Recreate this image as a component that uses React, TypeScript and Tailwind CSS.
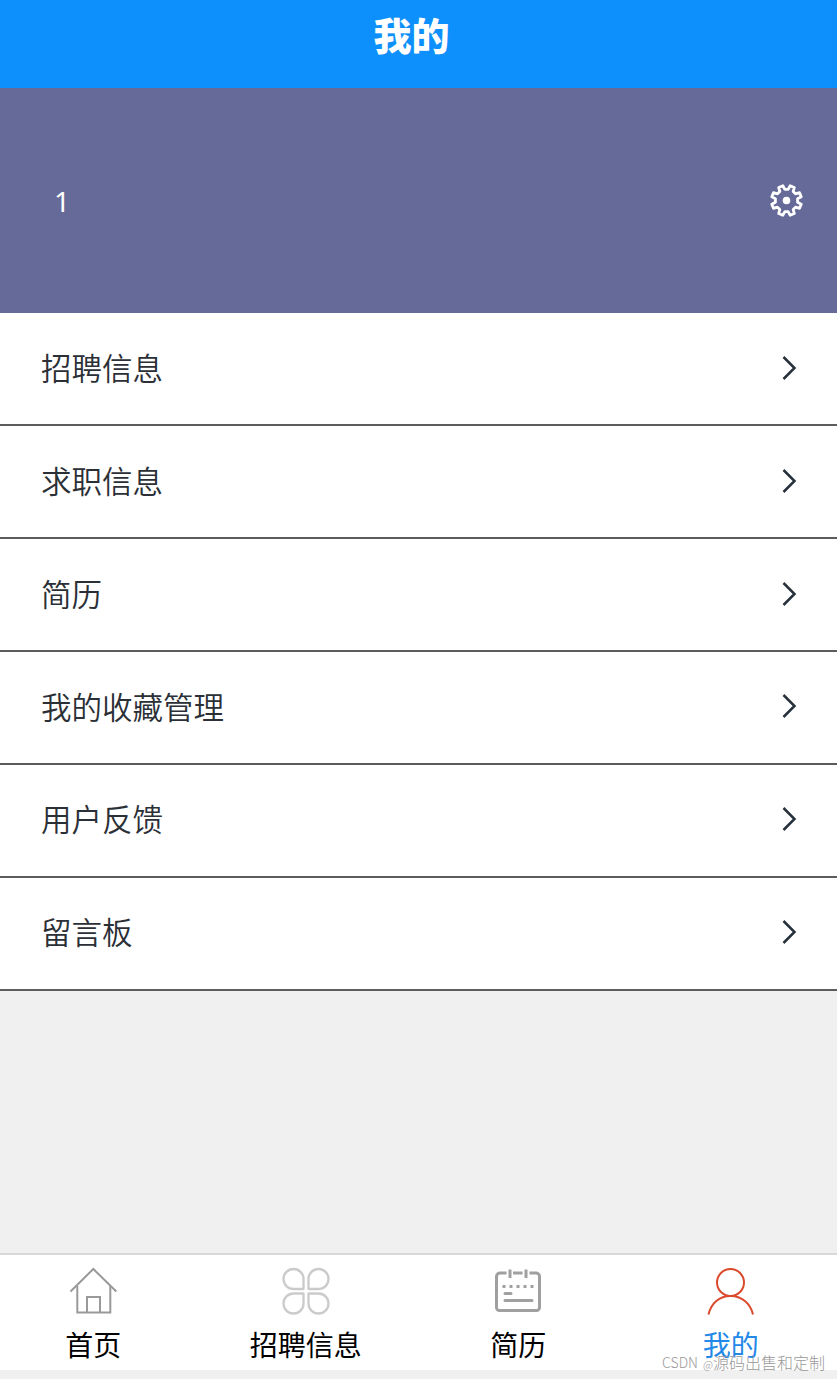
import type { ReactNode } from "react";

const menuItems = ["招聘信息", "求职信息", "简历", "我的收藏管理", "用户反馈", "留言板"];

const iconProps = {
  width: 48,
  height: 48,
  viewBox: "0 0 48 48",
  fill: "none",
  strokeWidth: 2,
};

const HomeIcon = () => (
  <svg {...iconProps} stroke="#999999">
    <path d="M1.5 24.500 24.300 2l23 22.500" />
    <path d="M8.300 19v26.500h33V19M18 45V30h13v15" />
  </svg>
);

const CloverIcon = () => (
  <svg {...iconProps} stroke="#cbcbcb" strokeWidth={2.3} strokeLinejoin="round">
    <path d="M21.500 22H11.500A10 10 0 1 1 21.500 12ZM26.500 22H36.500A10 10 0 1 0 26.500 12ZM21.500 26.500H11.500A10 10 0 1 0 21.500 36.500ZM26.500 26.500H36.500A10 10 0 1 1 26.500 36.500Z" />
  </svg>
);

const CalendarIcon = () => (
  <svg {...iconProps} stroke="#a0a0a0" strokeWidth={3}>
    <path d="M12.500 6H6a3.500 3.500 0 0 0-3.500 3.500v31A3 3 0 0 0 5.500 43.500h37a3 3 0 0 0 3-3v-31A3.500 3.500 0 0 0 42 6h-6.500M19 6h9.500" />
    <path d="M16 2.500v8.500M32 2.500v8.500" />
    <path d="M8.500 19.500h31" strokeDasharray="3 4" />
    <path d="M11 26.500h6M11 33.500h27" strokeLinecap="round" />
  </svg>
);

const UserIcon = () => (
  <svg {...iconProps} stroke="#dc4a2e">
    <circle cx="23.500" cy="15.500" r="13.500" />
    <path d="M1.500 47.500C4 36 12.500 29 23.500 29s20 7 22.500 18.500" />
  </svg>
);

const gearPoints = Array.from({ length: 8 }, (_, i) => {
  const tooth = 22.5 + i * 45;
  return [
    [11.2, -14],
    [15.2, -8.5],
    [15.2, 8.5],
    [11.2, 14],
  ]
    .map(([r, offset]) => {
      const a = ((tooth + offset) * Math.PI) / 180;
      return `${(16.5 + r * Math.cos(a)).toFixed(2)},${(16.5 + r * Math.sin(a)).toFixed(2)}`;
    })
    .join(" ");
}).join(" ");

const GearIcon = () => (
  <svg width="34" height="34" viewBox="0 0 34 34" fill="none" className="overflow-visible">
    <polygon points={gearPoints} stroke="white" strokeWidth="2.800" strokeLinejoin="round" />
    <circle cx="16.500" cy="16.500" r="3.800" fill="white" />
  </svg>
);

const ChevronIcon = () => (
  <svg width="16" height="26" viewBox="0 0 16 26" fill="none" stroke="#26313c" strokeWidth="2.500">
    <path d="m2.500 2 11 11-11 11" />
  </svg>
);

const tabs: { label: string; icon: ReactNode; active?: boolean }[] = [
  { label: "首页", icon: <HomeIcon /> },
  { label: "招聘信息", icon: <CloverIcon /> },
  { label: "简历", icon: <CalendarIcon /> },
  { label: "我的", icon: <UserIcon />, active: true },
];

const App = () => (
  <div className="relative flex h-[1379px] w-[837px] flex-col overflow-hidden bg-[#f0f0f0] font-['Noto_Sans_CJK_SC',sans-serif]">
    <header className="flex h-[88px] shrink-0 justify-center bg-[#0d90fb] pt-[7px] pr-[14px]">
      <h1 className="text-[38px] leading-[54px] font-black text-white">我的</h1>
    </header>

    <section className="flex h-[225px] shrink-0 items-center justify-between bg-[#666a99] pr-[33px] pl-[54px]">
      <span className="font-['Noto_Sans',sans-serif] text-[28px] text-white">1</span>
      <GearIcon />
    </section>

    <ul className="shrink-0 bg-white pt-[0.5px]">
      {menuItems.map((item) => (
        <li
          key={item}
          className="flex h-[112.85px] items-center justify-between border-b-2 border-[#5c5c5e] pr-[40px] pb-[2px] pl-[41px]"
        >
          <span className="text-[30.5px] font-[350] text-[#2b2f36]">{item}</span>
          <ChevronIcon />
        </li>
      ))}
    </ul>

    <nav className="mt-auto mb-[9px] h-[117px] shrink-0 border-t-2 border-[#d8d8d8] bg-white">
      <div className="-ml-[13px] grid w-[850px] grid-cols-4 pt-[12px]">
        {tabs.map((tab) => (
          <a key={tab.label} className="flex flex-col items-center">
            {tab.icon}
            <span className={`mt-[9px] text-[28px] leading-[40px] ${tab.active ? "text-[#2388e8]" : "text-black"}`}>
              {tab.label}
            </span>
          </a>
        ))}
      </div>
    </nav>

    <p className="absolute right-[12px] bottom-[3px] flex gap-[5px] text-[16px] leading-[24px] font-light whitespace-nowrap text-[#999999]">
      <span className="text-[14px]">CSDN</span>
      <span>
        <span className="text-[11px]">@</span>源码出售和定制
      </span>
    </p>
  </div>
);

export default App;
